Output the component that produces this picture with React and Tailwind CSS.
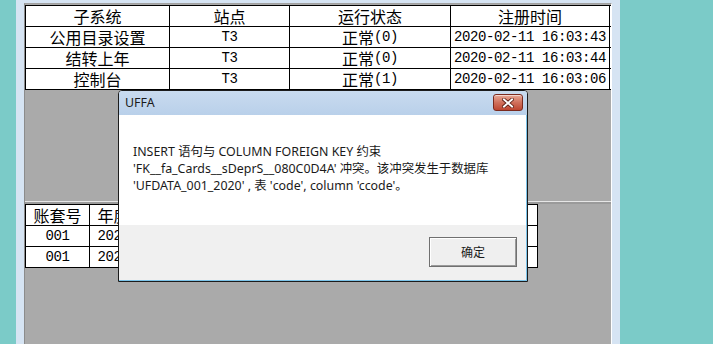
import React from "react";

const CJK_RE = /([\u3000-\u303f\u4e00-\u9fff\uff00-\uffef]+)/;

function Mixed({ t }) {
  const parts = t.split(CJK_RE).filter((p) => p.length);
  return (
    <span className="inline-block h-[18px] whitespace-pre leading-[18px]">
      {parts.map((p, i) =>
        CJK_RE.test(p) ? (
          <span key={i} className="inline-block h-[18px] align-top font-['Noto_Sans_CJK_SC',sans-serif] text-[16px] leading-[18px]">
            {p}
          </span>
        ) : (
          <span key={i} className="inline-block h-[18px] align-top font-['Liberation_Mono',monospace] text-[14px] leading-[18px] tracking-[-0.4px]">
            {p}
          </span>
        )
      )}
    </span>
  );
}

function Row({ cells, widths }) {
  return (
    <div className="flex h-[21px] border-b border-black bg-white">
      {cells.map((c, i) => (
        <div
          key={i}
          style={{ width: widths[i] }}
          className="flex shrink-0 items-center justify-center overflow-hidden border-r border-black text-black"
        >
          <Mixed t={c} />
        </div>
      ))}
    </div>
  );
}

const topWidths = [144, 120, 161, 159];
const topRows = [
  ["子系统", "站点", "运行状态", "注册时间"],
  ["公用目录设置", "T3", "正常(0)", "2020-02-11 16:03:43"],
  ["结转上年", "T3", "正常(0)", "2020-02-11 16:03:44"],
  ["控制台", "T3", "正常(1)", "2020-02-11 16:03:06"],
];

const botWidths = [64, 48, 100, 100, 100, 100];
const botRows = [
  ["账套号", "年度", "", "", "", ""],
  ["001", "2020", "", "", "", ""],
  ["001", "2020", "", "", "", ""],
];

function CloseButton() {
  return (
    <div className="flex h-[17px] w-[30px] items-center justify-center rounded-[3px] border border-[#7a2a1e] bg-gradient-to-b from-[#e8a896] via-[#d0705c] to-[#bd4530] shadow-[inset_0_1px_0_rgba(255,255,255,0.55)]">
      <svg width="12" height="10" viewBox="0 0 12 10">
        <path d="M2 1.5 L10 8.5 M10 1.5 L2 8.5" stroke="#5a1e14" strokeWidth="3.6" strokeLinecap="square" fill="none" />
        <path d="M2 1.5 L10 8.5 M10 1.5 L2 8.5" stroke="#ffffff" strokeWidth="2" strokeLinecap="square" fill="none" />
      </svg>
    </div>
  );
}

export default function App() {
  return (
    <div className="relative flex h-[344px] w-[713px] overflow-hidden bg-[#7bcbc8]">
      <div className="w-[16px] shrink-0" />
      <div className="flex h-full w-[604px] shrink-0 bg-[#d6e4f3] px-[8px] pt-[3px]">
        <div className="flex flex-1 flex-col border-l border-t border-r border-l-[#8c8c8c] border-t-[#a0a0a0] border-r-white bg-[#aaaaaa]">
          <div className="h-[197px] shrink-0 pt-[1px]">
            <div className="border-l border-t border-black">
              {topRows.map((r, i) => (
                <Row key={i} cells={r} widths={topWidths} />
              ))}
            </div>
          </div>
          <div className="h-[1px] shrink-0 bg-[#e6e6e6]" />
          <div className="h-[2px] shrink-0 bg-[#9a9a9a]" />
          <div className="flex-1">
            <div className="w-fit border-l border-t border-black">
              {botRows.map((r, i) => (
                <Row key={i} cells={r} widths={botWidths} />
              ))}
            </div>
          </div>
        </div>
      </div>

      {/* Dialog */}
      <div className="absolute left-[118px] top-[90px] flex h-[192px] w-[410px] flex-col overflow-hidden rounded-t-[4px] border border-[#1c1c1c] bg-[#f0f0f0]">
        <div className="flex h-[24px] shrink-0 items-start justify-between bg-gradient-to-b from-[#c9dbef] to-[#b9d0ea] pl-[6px] pr-[4px]">
          <span className="mt-[4px] font-['Noto_Sans','Noto_Sans_CJK_SC',sans-serif] text-[12.4px] leading-[16px] text-[#1a1a1a]">
            UFFA
          </span>
          <div className="mt-[3px]">
            <CloseButton />
          </div>
        </div>
        <div className="flex flex-1 flex-col border-b border-r border-[#7cc4ea]">
          <div className="h-[110px] shrink-0 bg-white pl-[14px] pt-[28px] font-['Noto_Sans','Noto_Sans_CJK_SC',sans-serif] text-[12.4px] leading-[17px] text-[#1a1a1a]">
            <div className="whitespace-pre">INSERT 语句与 COLUMN FOREIGN KEY 约束</div>
            <div className="whitespace-pre">'FK__fa_Cards__sDeprS__080C0D4A' 冲突。该冲突发生于数据库</div>
            <div className="whitespace-pre">'UFDATA_001_2020' , 表 'code', column 'ccode'。</div>
          </div>
          <div className="flex flex-1 justify-end bg-[#f0f0f0] pr-[9px] pt-[12px]">
            <div className="flex h-[30px] w-[88px] items-center justify-center border border-[#707070] bg-[#efefef] font-['Noto_Sans_CJK_SC',sans-serif] text-[12px] text-[#1a1a1a] shadow-[inset_1px_1px_0_#ffffff,inset_-1px_-1px_0_#9a9a9a]">
              确定
            </div>
          </div>
        </div>
      </div>
    </div>
  );
}
